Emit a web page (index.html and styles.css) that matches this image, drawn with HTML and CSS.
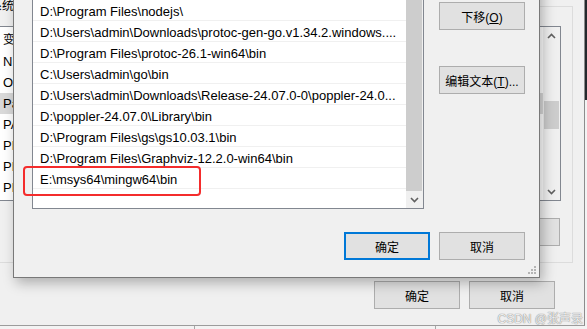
FILE: index.html
```html
<!DOCTYPE html>
<html>
<head>
  <title>编辑环境变量</title>
  <link rel="stylesheet" href="styles.css">
</head>
<body>

  <div class="desk-strip"></div>
  <div class="under-bar"><span></span><span></span></div>

  <!-- environment variables window, behind -->
  <div class="back-win">
    <div class="group">
      <span class="group-title">系统变量(S)</span>
      <div class="back-list">
        <div class="back-rows">
          <div class="back-head">变量</div>
          <div class="back-row">NUMBER_OF_PROCESSORS</div>
          <div class="back-row">OS</div>
          <div class="back-row sel">Path</div>
          <div class="back-row">PATHEXT</div>
          <div class="back-row">PHP_HOME</div>
          <div class="back-row">PROCESSOR_ARCHITECTURE</div>
          <div class="back-row">PROCESSOR_IDENTIFIER</div>
        </div>
        <div class="vscroll">
          <div class="sb-btn">
            <svg width="9" height="6" viewBox="0 0 9 6"><polyline points="1,5 4.5,1.5 8,5" fill="none" stroke="#606060" stroke-width="1.6"/></svg>
          </div>
          <div class="sb-track"><div class="sb-knob"></div></div>
          <div class="sb-btn">
            <svg width="9" height="6" viewBox="0 0 9 6"><polyline points="1,1 4.5,4.5 8,1" fill="none" stroke="#606060" stroke-width="1.6"/></svg>
          </div>
        </div>
      </div>
      <div class="back-actions">
        <button class="btn">新建(W)...</button>
        <button class="btn">编辑(I)...</button>
        <button class="btn">删除(L)</button>
      </div>
    </div>
    <div class="back-footer">
      <button class="btn">确定</button>
      <button class="btn">取消</button>
    </div>
  </div>

  <!-- edit environment variable dialog -->
  <div class="dialog">
    <div class="dlg-main">
      <div class="path-list">
        <div class="path-rows">
          <div class="path-row">%USERPROFILE%\AppData\Local\Microsoft\WindowsApps</div>
          <div class="path-row">D:\Program Files\Git\cmd</div>
          <div class="path-row">D:\Program Files\nodejs\</div>
          <div class="path-row">D:\Users\admin\Downloads\protoc-gen-go.v1.34.2.windows....</div>
          <div class="path-row">D:\Program Files\protoc-26.1-win64\bin</div>
          <div class="path-row">C:\Users\admin\go\bin</div>
          <div class="path-row">D:\Users\admin\Downloads\Release-24.07.0-0\poppler-24.0...</div>
          <div class="path-row">D:\poppler-24.07.0\Library\bin</div>
          <div class="path-row">D:\Program Files\gs\gs10.03.1\bin</div>
          <div class="path-row">D:\Program Files\Graphviz-12.2.0-win64\bin</div>
          <div class="path-row">E:\msys64\mingw64\bin</div>
        </div>
        <div class="vscroll">
          <div class="sb-btn">
            <svg width="9" height="6" viewBox="0 0 9 6"><polyline points="1,5 4.5,1.5 8,5" fill="none" stroke="#606060" stroke-width="1.6"/></svg>
          </div>
          <div class="sb-thumb"></div>
          <div class="sb-btn">
            <svg width="9" height="6" viewBox="0 0 9 6"><polyline points="1,1 4.5,4.5 8,1" fill="none" stroke="#606060" stroke-width="1.6"/></svg>
          </div>
        </div>
      </div>
      <div class="side">
        <button class="btn">上移(<u>U</u>)</button>
        <button class="btn">下移(<u>O</u>)</button>
        <button class="btn btn-gap">编辑文本(<u>T</u>)...</button>
      </div>
    </div>
    <div class="dlg-footer">
      <button class="btn btn-default">确定</button>
      <button class="btn">取消</button>
    </div>
    <svg class="grip" width="8" height="8" viewBox="0 0 8 8">
      <rect x="6" y="0" width="2" height="2" fill="#b4b4b4"/>
      <rect x="3" y="3" width="2" height="2" fill="#b4b4b4"/>
      <rect x="6" y="3" width="2" height="2" fill="#b4b4b4"/>
      <rect x="0" y="6" width="2" height="2" fill="#b4b4b4"/>
      <rect x="3" y="6" width="2" height="2" fill="#b4b4b4"/>
      <rect x="6" y="6" width="2" height="2" fill="#b4b4b4"/>
    </svg>
  </div>

  <div class="mark"></div>
  <div class="watermark">CSDN @张声录</div>

</body>
</html>
```

FILE: styles.css
```css
body {
  margin: 0;
  width: 587px;
  height: 329px;
  overflow: hidden;
  position: relative;
  background: #f3f3f3;
  font: 13px "Liberation Sans", "Noto Sans CJK SC", sans-serif;
  color: #000;
}

.desk-strip {
  position: absolute;
  right: 0;
  top: 0;
  width: 2px;
  height: 100px;
  background: #23282c;
}

.under-bar {
  position: absolute;
  left: 0;
  top: 326px;
  width: 587px;
  height: 3px;
}

.under-bar span {
  position: absolute;
  top: 0;
  width: 1px;
  height: 3px;
  background: #a8a8a8;
}

.under-bar span:first-child { left: 194px; }
.under-bar span:last-child { left: 435px; }

/* window behind */
.back-win {
  position: absolute;
  left: 0;
  top: 0;
  width: 585px;
  height: 326px;
  box-sizing: border-box;
  background: #f0f0f0;
  border-right: 1px solid #8c8c8c;
  border-bottom: 1px solid #9c9c9c;
  padding-top: 6px;
}

.group {
  position: relative;
  margin-left: -20px;
  width: 593px;
  box-sizing: border-box;
  border: 1px solid #dcdcdc;
  padding: 19px 11px 16px 9px;
}

.group-title {
  position: absolute;
  left: 7px;
  top: -8px;
  padding: 0 2px;
  background: #f0f0f0;
  font-size: 12px;
  line-height: 14px;
}

.back-list {
  display: flex;
  height: 175px;
  box-sizing: border-box;
  border: 1px solid #828790;
  background: #fff;
}

.back-rows {
  flex: 1;
  overflow: hidden;
}

.back-head {
  height: 24px;
  line-height: 26px;
  padding-left: 12px;
  font-size: 12px;
}

.back-row {
  height: 21px;
  line-height: 22px;
  padding-left: 12px;
  white-space: nowrap;
}

.back-row.sel {
  background: #d9d9d9;
}

.back-actions {
  display: flex;
  justify-content: flex-end;
  gap: 9px;
  margin: 17px 1px 0 0;
}

.back-footer {
  display: flex;
  justify-content: flex-end;
  gap: 9px;
  margin: 18px 29px 0 0;
}

/* scrollbars */
.vscroll {
  width: 17px;
  display: flex;
  flex-direction: column;
  background: #f0f0f0;
}

.sb-btn {
  height: 17px;
  display: flex;
  align-items: center;
  justify-content: center;
  flex: none;
}

.sb-thumb {
  flex: 1;
  background: #cdcdcd;
  margin: 0 1px 0 0;
}

.sb-track {
  flex: 1;
  padding-top: 57px;
}

.sb-knob {
  height: 28px;
  margin: 0 1px;
  background: #cdcdcd;
}

/* buttons */
.btn {
  width: 86px;
  height: 28px;
  box-sizing: border-box;
  background: #e1e1e1;
  border: 1px solid #adadad;
  border-radius: 0;
  padding: 0;
  font: 12px "Liberation Sans", "Noto Sans CJK SC", sans-serif;
  color: #000;
}

.btn-default {
  border: 2px solid #0078d7;
}

.btn-gap {
  margin-top: 28px;
}

/* edit dialog */
.dialog {
  position: absolute;
  left: 13px;
  top: -60px;
  width: 527px;
  box-sizing: border-box;
  background: #f0f0f0;
  border: 1px solid #787878;
  box-shadow: 3px 5px 12px rgba(0, 0, 0, 0.28);
}

.dlg-main {
  display: flex;
  gap: 15px;
  padding: 16px 14px 0 18px;
}

.path-list {
  display: flex;
  width: 392px;
  height: 252px;
  box-sizing: border-box;
  border: 1px solid #828790;
  background: #fff;
}

.path-rows {
  flex: 1;
  overflow: hidden;
}

.path-row {
  height: 21px;
  box-sizing: border-box;
  border-bottom: 1px solid #f0f0f0;
  padding: 3px 0 0 7px;
  line-height: 17px;
  white-space: nowrap;
  overflow: hidden;
}

.side {
  display: flex;
  flex-direction: column;
  gap: 8px;
  padding-top: 9px;
}

.dlg-footer {
  display: flex;
  justify-content: flex-end;
  gap: 9px;
  padding: 23px 14px 17px 0;
}

.grip {
  position: absolute;
  right: 3px;
  bottom: 3px;
}

.mark {
  position: absolute;
  left: 23px;
  top: 166px;
  width: 178px;
  height: 30px;
  box-sizing: border-box;
  border: 2px solid #f42c2c;
  border-radius: 4px;
}

.watermark {
  position: absolute;
  right: 4px;
  bottom: 3px;
  font: 12px "Liberation Sans", "Noto Sans CJK SC", sans-serif;
  color: rgba(255, 255, 255, 0.85);
  text-shadow: 0 0 1px #8a8a8a, 0 0 1px #8a8a8a;
}
```
